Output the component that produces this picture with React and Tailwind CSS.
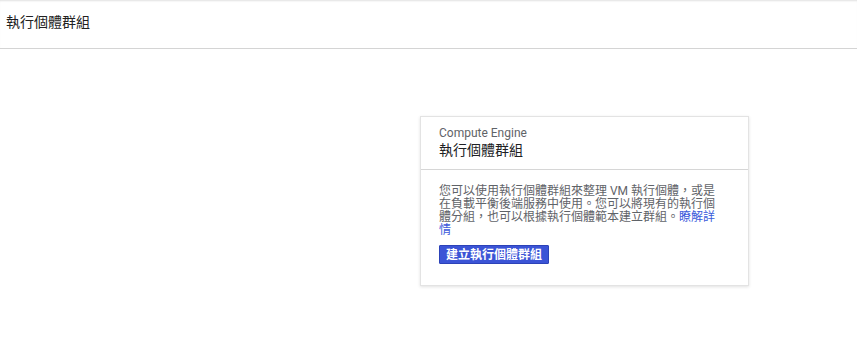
import React from "react";

const font = { fontFamily: '"Roboto", "Noto Sans CJK TC", sans-serif' };

function Header() {
  return (
    <div className="h-[49px] border-b border-[#d4d4d4] bg-white shadow-[inset_0_2px_2px_-1px_rgba(0,0,0,0.12)] flex items-center px-[6px]">
      <h1 className="text-[14px] leading-[20px] text-[#212121] -mt-[5px]">執行個體群組</h1>
    </div>
  );
}

function EmptyCard() {
  return (
    <div className="w-[329px] bg-white border border-[#e3e3e3] shadow-[0_1px_3px_rgba(0,0,0,0.12)]">
      <div className="pl-[18px] pt-[9px] pb-[10px] border-b border-[#d6d6d6]">
        <p className="text-[12px] leading-[15px] text-[#5f6368]">Compute Engine</p>
        <p className="text-[14px] leading-[18px] text-[#202124]">執行個體群組</p>
      </div>
      <div className="pl-[18px] pr-[22px] pt-[15px] pb-[19px]">
        <p className="w-[284px] text-[12px] leading-[13px] text-[#5f6368]">
          您可以使用執行個體群組來整理 VM 執行個體，或是在負載平衡後端服務中使用。您可以將現有的執行個體分組，也可以根據執行個體範本建立群組。
          <a href="#" className="text-[#3b5bdb]">瞭解詳情</a>
        </p>
        <button className="mt-[8px] h-[19px] px-[6px] bg-[#3b54d6] border border-[#2c42b8] rounded-[1px] text-white text-[12px] leading-[16px] font-bold">
          建立執行個體群組
        </button>
      </div>
    </div>
  );
}

export default function App() {
  return (
    <div className="w-[857px] h-[361px] bg-white overflow-hidden" style={font}>
      <Header />
      <div className="pl-[420px] pt-[67px]">
        <EmptyCard />
      </div>
    </div>
  );
}
